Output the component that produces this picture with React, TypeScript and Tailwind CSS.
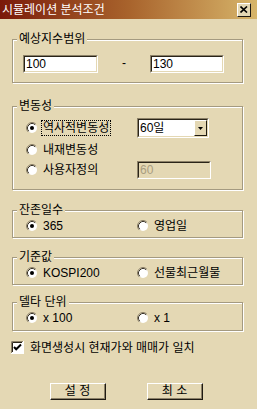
import React from 'react';

const BG = 'bg-[#e4d8b4]';

function Radio({ checked }: { checked?: boolean }) {
  return (
    <svg width="12" height="12" viewBox="0 0 12 12" className="shrink-0">
      <circle cx="6" cy="6" r="5" fill="#fff" />
      <path d="M9.89 2.11 A5.5 5.5 0 0 0 2.11 9.89" stroke="#8c8168" fill="none" />
      <path d="M9.18 2.82 A4.5 4.5 0 0 0 2.82 9.18" stroke="#3a3428" fill="none" />
      {checked && <circle cx="6" cy="6" r="2" fill="#000" />}
    </svg>
  );
}

function Group({ title, className, children }: { title: string; className?: string; children: React.ReactNode }) {
  return (
    <div className={`relative ml-[12px] w-[231px] border border-[#a49a80] shadow-[inset_1px_1px_0_#fff,1px_1px_0_#fff] ${className ?? ''}`}>
      <span className={`absolute left-[4px] top-[-8px] px-[2px] leading-[14px] ${BG}`}>{title}</span>
      {children}
    </div>
  );
}

function Sunken({ className, children }: { className?: string; children?: React.ReactNode }) {
  return (
    <div className={`border border-t-[#8c8168] border-l-[#8c8168] border-r-white border-b-white ${className ?? ''}`}>
      <div className="h-full w-full border border-t-[#2a2418] border-l-[#2a2418] border-r-[#e4d8b4] border-b-[#e4d8b4]">
        {children}
      </div>
    </div>
  );
}

function Btn({ label }: { label: string }) {
  return (
    <div className={`h-[17px] w-[56px] border border-t-white border-l-white border-r-[#1e1a12] border-b-[#1e1a12] ${BG}`}>
      <div className="flex h-full w-full items-center justify-center border-r border-b border-[#8c8168] leading-none">
        {label}
      </div>
    </div>
  );
}

function RadioPair({ left, right, leftChecked }: { left: string; right: string; leftChecked?: boolean }) {
  return (
    <div className="flex h-[14px] items-center pl-[13px] pt-[0px]">
      <Radio checked={leftChecked} />
      <div className="ml-[3px] w-[96px] pl-[2px]">{left}</div>
      <Radio checked={!leftChecked} />
      <div className="ml-[5px]">{right}</div>
    </div>
  );
}

export default function App() {
  return (
    <div className={`h-[409px] w-[257px] overflow-hidden text-[12px] text-black font-['Liberation_Sans','Noto_Sans_CJK_KR',sans-serif] ${BG}`}>
      <div className="flex h-[19px] items-center justify-between bg-gradient-to-r from-[#7a180a] via-[#a8632c] to-[#d6b56a] pl-[2px] pr-[6px]">
        <span className="text-white leading-none">시뮬레이션 분석조건</span>
        <div className={`flex h-[14px] w-[14px] items-center justify-center border border-t-white border-l-white border-r-[#1e1a12] border-b-[#1e1a12] ${BG}`}>
          <svg width="8" height="7" viewBox="0 0 8 7">
            <path d="M0.5 0.5 L7 6.5 M7 0.5 L0.5 6.5" stroke="#000" strokeWidth="1.6" />
          </svg>
        </div>
      </div>

      <Group title="예상지수범위" className="mt-[20px] h-[44px]">
        <div className="flex items-start pl-[10px] pt-[15px]">
          <Sunken className="h-[18px] w-[75px] bg-white">
            <div className="pl-[1px] leading-[14px]">100</div>
          </Sunken>
          <div className="flex w-[52px] justify-center leading-[16px]">-</div>
          <Sunken className="h-[18px] w-[74px] bg-white">
            <div className="pl-[1px] leading-[14px]">130</div>
          </Sunken>
        </div>
      </Group>

      <Group title="변동성" className="mt-[23px] h-[84px]">
        <div className="flex flex-col pl-[13px] pt-[11px]">
          <div className="flex h-[20px] items-center">
            <Radio checked />
            <div className="ml-[3px] w-[96px]">
              <span className="border border-dotted border-black px-[1px] leading-[14px]">역사적변동성</span>
            </div>
            <Sunken className="h-[20px] w-[72px] bg-white">
              <div className="flex h-full items-center justify-between">
                <span className="pl-[1px] leading-none">60일</span>
                <div className={`flex h-full w-[13px] items-center justify-center border border-t-white border-l-white border-r-[#1e1a12] border-b-[#1e1a12] ${BG}`}>
                  <svg width="5" height="3" viewBox="0 0 5 3">
                    <path d="M0 0 H5 L2.5 3 Z" fill="#000" />
                  </svg>
                </div>
              </div>
            </Sunken>
          </div>
          <div className="mt-[2px] flex h-[20px] items-center">
            <Radio />
            <span className="ml-[5px] leading-none">내재변동성</span>
          </div>
          <div className="mt-[1px] flex h-[18px] items-center">
            <Radio />
            <div className="ml-[5px] w-[94px] leading-none">사용자정의</div>
            <Sunken className={`h-[18px] w-[74px] ${BG}`}>
              <div className="pl-[1px] leading-[14px] text-[#a99d80]">60</div>
            </Sunken>
          </div>
        </div>
      </Group>

      <Group title="잔존일수" className="mt-[20px] h-[28px]">
        <div className="pt-[8px]">
          <RadioPair left="365" right="영업일" leftChecked />
        </div>
      </Group>

      <Group title="기준값" className="mt-[19px] h-[28px]">
        <div className="pt-[8px]">
          <RadioPair left="KOSPI200" right="선물최근월물" leftChecked />
        </div>
      </Group>

      <Group title="델타 단위" className="mt-[17px] h-[29px]">
        <div className="pt-[8px]">
          <RadioPair left="x 100" right="x 1" leftChecked />
        </div>
      </Group>

      <div className="ml-[11px] mt-[10px] flex h-[13px] items-center">
        <svg width="13" height="13" viewBox="0 0 13 13" className="shrink-0">
          <rect x="0" y="0" width="13" height="13" fill="#fff" />
          <path d="M0.5 12 V0.5 H12" stroke="#8c8168" fill="none" />
          <path d="M1.5 11 V1.5 H11" stroke="#2a2418" fill="none" />
          <path d="M3 6 L5.2 8.3 L10 3.5" stroke="#000" strokeWidth="2" fill="none" />
        </svg>
        <span className="ml-[6px] leading-none">화면생성시 현재가와 매매가 일치</span>
      </div>

      <div className="ml-[50px] mt-[29px] flex gap-[41px]">
        <Btn label="설 정" />
        <Btn label="최 소" />
      </div>
    </div>
  );
}
